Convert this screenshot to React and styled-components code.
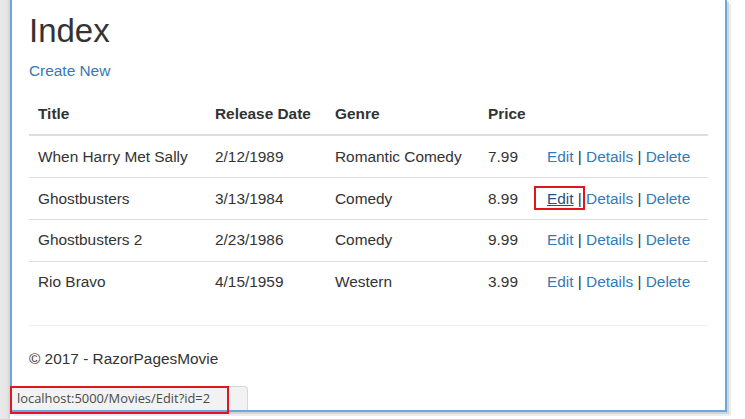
import React from "react"
import styled, { createGlobalStyle } from "styled-components"

const GlobalStyle = createGlobalStyle`
  html, body {
    margin: 0;
    padding: 0;
    background: #ffffff;
    overflow: hidden;
  }
  body {
    font-family: "Liberation Sans", Arial, sans-serif;
  }
`

const colors = {
  text: "#333333",
  link: "#337ab7",
  linkHover: "#23527c",
  line: "#dddddd",
  frame: "#6ba6dd",
  annotate: "#e3131f",
}

const Desktop = styled.div`
  display: flex;
  width: 745px;
  height: 419px;
  background: #ffffff;
`

const Gutter = styled.div`
  width: 10px;
  height: 100%;
  background: linear-gradient(to right, #e9e9e9 0, #e4e4e4 70%, #d2d2d2 100%);
`

const Window = styled.div`
  position: relative;
  width: 713px;
  height: 410px;
  border: 2px solid ${colors.frame};
  border-top: 0;
  background: #ffffff;
  box-shadow: 2px 2px 0 #d4d4d4, 4px 4px 0 #ececec;
`

const Body = styled.div`
  padding: 0 17px;
  color: ${colors.text};
  font-size: 15.4px;
  line-height: 22px;
`

const Heading = styled.h2`
  margin: 13px 0 11px;
  font-size: 33px;
  font-weight: 500;
  line-height: 36px;
`

const Para = styled.p`
  margin: 0 0 ${(p) => p.$gap || 0}px;
`

const Link = styled.a`
  color: ${(p) => (p.$hover ? colors.linkHover : colors.link)};
  text-decoration: ${(p) => (p.$hover ? "underline" : "none")};
  cursor: pointer;
`

const Table = styled.table`
  width: 679px;
  table-layout: fixed;
  border-collapse: collapse;
  border-spacing: 0;
  margin-bottom: 22px;
`

const HeadCell = styled.th`
  text-align: left;
  font-weight: bold;
  padding: 9px 9px 9.4px;
  border-bottom: 2px solid ${colors.line};
`

const Cell = styled.td`
  padding: 9.4px 9px;
  border-top: 1px solid ${colors.line};
  white-space: nowrap;
`

const Rule = styled.hr`
  margin: 0 0 22px;
  border: 0;
  border-top: 1px solid #eeeeee;
`

const Marked = styled.span`
  position: relative;

  &::after {
    content: "";
    position: absolute;
    left: -13px;
    right: -11px;
    top: -4px;
    bottom: -3px;
    border: 2.5px solid ${colors.annotate};
  }
`

const StatusBar = styled.div`
  position: absolute;
  left: 0;
  bottom: 0;
  width: 236px;
  height: 24px;
  padding-left: 5px;
  box-sizing: border-box;
  background: #f2f2f2;
  border-top: 1px solid #d7d7d7;
  border-right: 1px solid #d7d7d7;
  border-top-right-radius: 4px;
  color: #4a4a4a;
  font-family: "Open Sans", "Liberation Sans", sans-serif;
  font-size: 12.9px;
  line-height: 23px;
  white-space: nowrap;
`

const StatusMark = styled.div`
  position: absolute;
  left: -2px;
  bottom: -4px;
  width: 219px;
  height: 28px;
  box-sizing: border-box;
  border: 2.5px solid ${colors.annotate};
`

const movies = [
  { title: "When Harry Met Sally", date: "2/12/1989", genre: "Romantic Comedy", price: "7.99" },
  { title: "Ghostbusters", date: "3/13/1984", genre: "Comedy", price: "8.99", hover: true },
  { title: "Ghostbusters 2", date: "2/23/1986", genre: "Comedy", price: "9.99" },
  { title: "Rio Bravo", date: "4/15/1959", genre: "Western", price: "3.99" },
]

const App = () => {
  return (
    <Desktop>
      <GlobalStyle />
      <Gutter />
      <Window>
        <Body>
          <Heading>Index</Heading>
          <Para $gap={12}>
            <Link>Create New</Link>
          </Para>
          <Table>
            <colgroup>
              <col style={{ width: 177 }} />
              <col style={{ width: 120 }} />
              <col style={{ width: 153 }} />
              <col style={{ width: 59 }} />
              <col style={{ width: 170 }} />
            </colgroup>
            <thead>
              <tr>
                <HeadCell>Title</HeadCell>
                <HeadCell>Release Date</HeadCell>
                <HeadCell>Genre</HeadCell>
                <HeadCell>Price</HeadCell>
                <HeadCell />
              </tr>
            </thead>
            <tbody>
              {movies.map((m) => (
                <tr key={m.title}>
                  <Cell>{m.title}</Cell>
                  <Cell>{m.date}</Cell>
                  <Cell>{m.genre}</Cell>
                  <Cell>{m.price}</Cell>
                  <Cell>
                    {m.hover ? (
                      <Marked>
                        <Link $hover>Edit</Link>
                      </Marked>
                    ) : (
                      <Link>Edit</Link>
                    )}{" "}
                    | <Link>Details</Link> | <Link>Delete</Link>
                  </Cell>
                </tr>
              ))}
            </tbody>
          </Table>
          <Rule />
          <Para>© 2017 - RazorPagesMovie</Para>
        </Body>
        <StatusBar>localhost:5000/Movies/Edit?id=2</StatusBar>
        <StatusMark />
      </Window>
    </Desktop>
  )
}

export default App
